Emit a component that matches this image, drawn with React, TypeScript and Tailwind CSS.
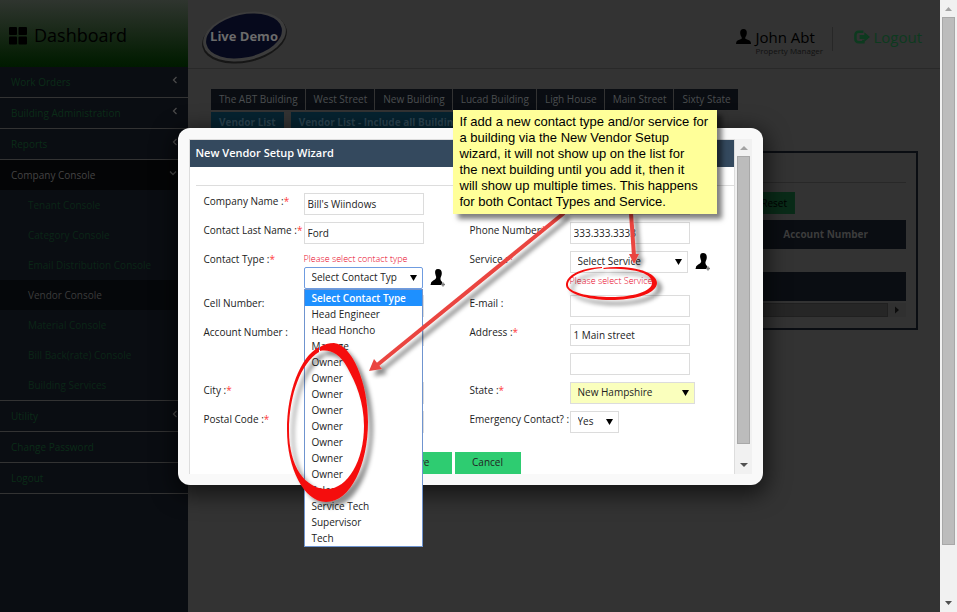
import React from "react";

const subItems = [
  "Tenant Console",
  "Category Console",
  "Email Distribution Console",
  "Vendor Console",
  "Material Console",
  "Bill Back(rate) Console",
  "Building Services",
];

const buildings = ["The ABT Building", "West Street", "New Building", "Lucad Building", "Ligh House", "Main Street", "Sixty State"];

const contactTypes = [
  "Select Contact Type",
  "Head Engineer",
  "Head Honcho",
  "Manage",
  "Owner",
  "Owner",
  "Owner",
  "Owner",
  "Owner",
  "Owner",
  "Owner",
  "Owner",
  "Sales",
  "Service Tech",
  "Supervisor",
  "Tech",
];

const fieldClass = "h-[22px] border text-[10px] text-[#222] outline-none";

function Chevron({ down = false }: { down?: boolean }) {
  return (
    <svg className="mb-1 h-2 w-2" viewBox="0 0 8 8" fill="none" stroke="#4a4a4a" strokeWidth="1.3">
      <path d={down ? "M1 2.5 4 5.5 7 2.5" : "M5.5 1 2.5 4 5.5 7"} />
    </svg>
  );
}

function SideLink({ text, arrow = false }: { text: string; arrow?: boolean }) {
  return (
    <a href="#" className="flex h-[31px] items-center justify-between border-b border-[#333] pr-[9px] pl-[11px] text-[#0b2c18]">
      {text}
      {arrow && <Chevron />}
    </a>
  );
}

function Sidebar() {
  return (
    <nav className="w-[188px] shrink-0 bg-[#0a0d12] text-[10px]">
      <div className="flex h-[67px] items-center bg-linear-to-b from-[#2f352f] to-[#001a00] pt-1 pl-[9px] text-black">
        <svg className="h-[18px] w-[18px]" viewBox="0 0 18 18">
          <rect width="8" height="8" rx="1" />
          <rect x="9.5" width="8.5" height="8" rx="1" />
          <rect y="9.5" width="8" height="8" rx="1" />
          <rect x="9.5" y="9.5" width="8.5" height="8" rx="1" />
        </svg>
        <span className="pl-[7px] text-[18px] font-medium">Dashboard</span>
      </div>
      <SideLink text="Work Orders" arrow />
      <SideLink text="Building Administration" arrow />
      <SideLink text="Reports" arrow />
      <a href="#" className="flex h-[30px] items-center justify-between bg-[#040506] pr-[11px] pl-[11px] text-[#444]">
        Company Console
        <Chevron down />
      </a>
      <div className="border-b border-[#333]">
        {subItems.map((item) => (
          <a
            key={item}
            href="#"
            className={
              item === "Vendor Console"
                ? "flex h-[30px] items-center bg-[#05070a] pl-7 text-[#3c3c3c]"
                : "flex h-[30px] items-center pl-7 text-[#0a2617]"
            }
          >
            {item}
          </a>
        ))}
      </div>
      <SideLink text="Utility" arrow />
      <SideLink text="Change Password" />
      <SideLink text="Logout" />
    </nav>
  );
}

function Logo() {
  return (
    <svg className="h-[56px] w-[90px]" viewBox="0 0 90 56">
      <ellipse cx="43.5" cy="30" rx="43" ry="24.5" fill="#161616" transform="rotate(-12 43.5 30)" />
      <ellipse cx="43.5" cy="28.5" rx="42" ry="24" fill="#3c3c3c" transform="rotate(-12 43.5 28.5)" />
      <ellipse cx="43" cy="28" rx="38.5" ry="21.5" fill="#06091c" transform="rotate(-12 43 28)" />
      <text x="43" y="33" textAnchor="middle" fill="#6b6b6b" fontSize="13" fontWeight="700" fontFamily="Open Sans, sans-serif">
        Live Demo
      </text>
    </svg>
  );
}

function PageHeader() {
  return (
    <header className="flex h-[69px] justify-between border-b border-[#292929] pr-[18px] pl-[13px]">
      <div className="pt-2">
        <Logo />
      </div>
      <div className="flex pt-[27px]">
        <svg className="mt-[2px] h-[15px] w-[15px]" viewBox="0 0 15 15">
          <path d="M7.5 0C5 0 4 1.8 4.2 4.2c.2 2 .9 3.2 1.5 4v1.6L1.5 11.600Q0 12.400 0 15h15q0-2.600-1.500-3.400L9.300 9.800V8.200c.6-.8 1.300-2 1.500-4C11 1.800 10 0 7.500 0z" />
        </svg>
        <div className="w-[81px] pl-1 text-black">
          <div className="text-[15px] leading-5 whitespace-nowrap">John Abt</div>
          <div className="text-[8px] leading-2 whitespace-nowrap text-[#111]">Property Manager</div>
        </div>
        <a href="#" className="flex h-6 border-l border-[#272727] pl-[21px] text-[15px] leading-5 text-[#0d3a1f]">
          <svg className="mt-[3px] mr-[3px] h-[14px] w-[16px]" viewBox="0 0 17 14">
            <path d="M10 1.500H5Q1.500 1.500 1.500 5v4q0 3.500 3.500 3.500h5V10" fill="none" stroke="#0d3a1f" strokeWidth="2.600" />
            <path d="M6 5h5V2l6 5-6 5V9H6z" fill="#0d3a1f" />
          </svg>
          Logout
        </a>
      </div>
    </header>
  );
}

function VendorPage() {
  return (
    <main className="min-w-0 flex-1">
      <PageHeader />
      <div className="px-[22px] pl-[23px] pt-5 text-[10px]">
        <div className="flex">
          {buildings.map((b) => (
            <button key={b} className="mr-px h-[21px] bg-[#0a0d12] pr-[7px] pl-2 whitespace-nowrap text-[#4a4d50]">
              {b}
            </button>
          ))}
        </div>
        <div className="mt-[2px] flex gap-[7px] font-bold text-[#2c4450]">
          <button className="h-[21px] bg-[#062330] px-[8px] whitespace-nowrap">Vendor List</button>
          <button className="h-[21px] bg-[#062330] px-[8px] whitespace-nowrap">Vendor List - Include all Buildings</button>
        </div>
        <section className="mt-[18px] h-[179px] border-2 border-[#0a0d12] p-[10px]">
          <div className="h-5 border-b border-[#282828]" />
          <div className="flex justify-end pt-[9px] pr-[111px]">
            <button className="h-[22px] bg-[#092b18] px-2 text-black">Reset</button>
          </div>
          <div className="mt-[6px] flex h-[29px] items-center justify-end bg-[#0a0d12] pr-[38px] font-bold text-[#3c3c3c]">Account Number</div>
          <div className="mt-[23px] h-[29px] bg-[#0a0d12]" />
          <div className="mt-[2px] flex h-[14px] bg-[#303030]">
            <div className="flex-1 border border-[#202020] bg-[#262626]" />
            <svg className="h-[14px] w-[18px]" viewBox="0 0 18 14">
              <path d="M7 3.500 11 7 7 10.500z" fill="#0c0c0c" />
            </svg>
          </div>
        </section>
      </div>
    </main>
  );
}

function FieldLabel({ id, text, required = false }: { id: string; text: string; required?: boolean }) {
  return (
    <label htmlFor={id} className="block h-4 leading-4 whitespace-nowrap">
      {text}
      {required && <span className="text-[#ff3b3b]">*</span>}
    </label>
  );
}

function TextBox({ id, value = "", label }: { id: string; value?: string; label?: string }) {
  return <input id={id} aria-label={label} defaultValue={value} className={`${fieldClass} w-[120px] border-[#dcdcdc] bg-white px-[3px]`} />;
}

function SelectBox({ id, value, width, tone = "border-[#dcdcdc] bg-white" }: { id: string; value: string; width: string; tone?: string }) {
  return (
    <div className={`relative ${width}`}>
      <select id={id} className={`${fieldClass} block w-full appearance-none pr-3 pl-[7px] ${tone}`}>
        <option>{value}</option>
      </select>
      <svg className="pointer-events-none absolute top-2 right-[6px] h-[6px] w-[7px]" viewBox="0 0 7 6">
        <path d="M0 0h7L3.500 6z" />
      </svg>
    </div>
  );
}

function AddPerson() {
  return (
    <button type="button" aria-label="Add" className="ml-[7px] h-[18px] w-[16px]">
      <svg className="h-[18px] w-[16px]" viewBox="0 0 16 18">
        <path d="M8 0C5.500 0 4.800 2 5.200 4.500c.2 1.500.8 2.600 1 3.500 0 1.500-1 2.500-3 3.500Q.6 12.600.5 16h11.300l.4-3c-1-1-2-2-1.700-4 .6-1.500 1.300-3 1.300-5C11.700 1.400 10.500 0 8 0z" />
        <path d="M13 13.500v4M11 15.500h4" stroke="#777" strokeWidth="1.400" />
      </svg>
    </button>
  );
}

function VendorForm() {
  return (
    <form className="grid grid-cols-[100px_166px_100px_1fr] grid-rows-[29px_29px_44px_29px_29px_29px_29px_29px] pt-[7px] pl-2">
      <FieldLabel id="company" text="Company Name :" required />
      <TextBox id="company" value="Bill's Wiindows" />
      <span />
      <TextBox id="first" label="Contact First Name" />

      <FieldLabel id="last" text="Contact Last Name :" required />
      <TextBox id="last" value="Ford" />
      <FieldLabel id="phone" text="Phone Number" required />
      <TextBox id="phone" value="333.333.3333" />

      <FieldLabel id="type" text="Contact Type :" required />
      <div>
        <div className="h-4 text-[9px] leading-4 font-light text-[#e8001c]">Please select contact type</div>
        <div className="relative flex items-center">
          <SelectBox id="type" value="Select Contact Typ" width="w-[119px]" tone="rounded-xs border-[#6f9ce0] bg-white" />
          <AddPerson />
          <ul role="listbox" className="absolute top-[22px] left-0 z-10 w-[119px] border border-[#6f94cf] bg-white">
            {contactTypes.map((type, i) => (
              <li
                key={i}
                role="option"
                aria-selected={i === 0}
                className={i === 0 ? "h-4 bg-[#1e90ff] pl-[7px] leading-4 font-semibold text-white" : "h-4 pl-[7px] leading-4"}
              >
                {type}
              </li>
            ))}
          </ul>
        </div>
      </div>
      <FieldLabel id="service" text="Service :" required />
      <div>
        <div className="flex items-center">
          <SelectBox id="service" value="Select Service" width="w-[118px]" />
          <AddPerson />
        </div>
        <div className="h-4 text-[9px] leading-4 font-light text-[#e8001c]">Please select Service</div>
      </div>

      <FieldLabel id="cell" text="Cell Number:" />
      <TextBox id="cell" />
      <FieldLabel id="email" text="E-mail :" />
      <TextBox id="email" />

      <FieldLabel id="account" text="Account Number :" />
      <TextBox id="account" />
      <FieldLabel id="address" text="Address :" required />
      <TextBox id="address" value="1 Main street" />

      <span />
      <span />
      <span />
      <TextBox id="address2" label="Address line 2" />

      <FieldLabel id="city" text="City :" required />
      <TextBox id="city" />
      <FieldLabel id="state" text="State :" required />
      <SelectBox id="state" value="New Hampshire" width="w-[125px]" tone="border-[#dcdcdc] bg-[#faffbd]" />

      <FieldLabel id="postal" text="Postal Code :" required />
      <TextBox id="postal" />
      <FieldLabel id="emergency" text="Emergency Contact? :" />
      <SelectBox id="emergency" value="Yes" width="w-[49px]" />
    </form>
  );
}

function Annotations() {
  return (
    <>
      <svg className="pointer-events-none absolute top-0 left-0 z-20 h-[430px] w-[585px] overflow-visible" viewBox="178 128 585 430">
        <defs>
          <filter id="drop" x="-30%" y="-30%" width="170%" height="170%">
            <feDropShadow dx="5" dy="5" stdDeviation="2" floodColor="#000" floodOpacity="0.45" />
          </filter>
        </defs>
        <g filter="url(#drop)">
          <path
            fill="#f5110c"
            fillRule="evenodd"
            d="M319 347C300 357 287 392 287 430c0 38 17 72 39 72 25 0 42-38 42-80 0-40-16-77-34-79q-8 0-14 4v4c10-2 20 3 27 16 9 16 17 35 17 59 0 34-16 63-37 63-22 0-38-23-38-58 0-36 12-68 30-79z"
          />
          <path
            fill="#f5110c"
            fillRule="evenodd"
            d="M602 267c-23 1-36 9-36 18 0 8 20 15 45 15s46-7 46-17c0-9-17-16-40-16q-8 0-14 1l1 1c30-1 48 4 48 14 0 8-18 14-41 14s-43-5-43-12c0-8 13-15 34-17z"
          />
          <path d="M564 213 376 366" stroke="#ea4540" strokeWidth="4" fill="none" />
          <path d="M369 371 374 359 382 369z" fill="#ea4540" />
          <path d="M631 213 634 256" stroke="#ea4540" strokeWidth="4" fill="none" />
          <path d="M634 264 629 254 639 254z" fill="#ea4540" />
        </g>
      </svg>
      <div className="absolute top-[-18px] left-[275px] z-20 h-[104px] w-[264px] bg-[#ffff99] px-[7px] py-1 font-['Liberation_Sans',Arial,sans-serif] text-[13px] leading-4 text-black shadow-[5px_5px_5px_rgba(0,0,0,0.5)]">
        If add a new contact type and/or service for
        <br />a building via the New Vendor Setup
        <br />wizard, it will not show up on the list for
        <br />the next building until you add it, then it
        <br />will show up multiple times. This happens
        <br />for both Contact Types and Service.
      </div>
    </>
  );
}

function Wizard() {
  return (
    <div
      role="dialog"
      aria-label="New Vendor Setup Wizard"
      className="relative w-[585px] rounded-xl bg-[#f9f9f9] p-[11px] text-[10px] text-[#222] shadow-[0_6px_22px_4px_rgba(0,0,0,0.6)]"
    >
      <div className="flex h-[335px] border-l border-[#ddd] bg-white">
        <div className="flex min-w-0 flex-1 flex-col border-t border-r border-[#ddd]">
          <h1 className="flex h-[27px] shrink-0 items-center bg-[#34495e] pl-[6px] text-[11px] font-semibold text-white">New Vendor Setup Wizard</h1>
          <div className="ml-[6px] h-[19px] shrink-0 border-b border-[#ddd]" />
          <div className="pl-[6px]">
            <VendorForm />
          </div>
          <div className="flex gap-[3px] pt-[12px] pl-[196px]">
            <button className="h-[22px] w-[66px] bg-[#2ecc71]">Save</button>
            <button className="h-[22px] w-[66px] bg-[#2ecc71]">Cancel</button>
          </div>
        </div>
        <div className="flex w-[17px] flex-col items-center bg-[#f1f1f1]">
          <svg className="h-[17px] w-[17px]" viewBox="0 0 17 17">
            <path d="M5 11 9 7l4 4z" fill="#a3a3a3" />
          </svg>
          <div className="w-[13px] flex-1 border border-[#a8a8a8] bg-[#bcbcbc]" />
          <svg className="h-[30px] w-[17px]" viewBox="0 0 17 30">
            <path d="M5 19h8l-4 4z" fill="#505050" />
          </svg>
        </div>
      </div>
      <Annotations />
    </div>
  );
}

export default function App() {
  return (
    <div className="relative flex min-h-screen overflow-hidden bg-[#333] font-['Open_Sans','Noto_Sans',sans-serif]">
      <Sidebar />
      <VendorPage />
      <div className="flex w-[17px] shrink-0 flex-col items-center bg-[#f1f1f1]">
        <svg className="h-[17px] w-[17px]" viewBox="0 0 17 17">
          <path d="M5 11 8.500 7 12 11z" fill="#a3a3a3" />
        </svg>
        <div className="w-[13px] flex-1 border border-[#a8a8a8] bg-[#bcbcbc]" />
        <svg className="h-[67px] w-[17px]" viewBox="0 0 17 67">
          <path d="M5 56h7l-3.500 4z" fill="#505050" />
        </svg>
      </div>
      <div className="absolute inset-y-0 right-[17px] left-0 flex items-center justify-center">
        <Wizard />
      </div>
    </div>
  );
}
